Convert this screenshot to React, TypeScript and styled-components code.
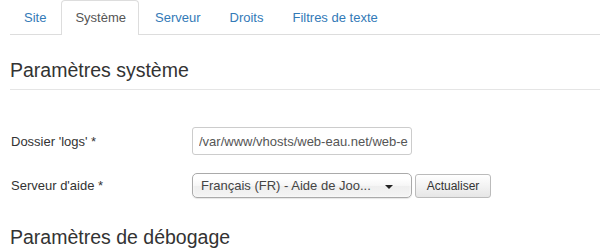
import React from 'react';
import styled, { createGlobalStyle } from 'styled-components';

const tabs = ['Site', 'Système', 'Serveur', 'Droits', 'Filtres de texte'];

const App: React.FC = () => {
  return (
    <>
      <GlobalStyle />
      <Page>
        {/* tabs */}
        <TabList>
          {tabs.map(tab => (
            <Tab key={tab} active={tab === 'Système'}>
              {tab}
            </Tab>
          ))}
        </TabList>

        {/* system settings */}
        <Legend>Paramètres système</Legend>

        <FieldRow>
          <Label>Dossier 'logs' *</Label>
          <TextInput defaultValue="/var/www/vhosts/web-eau.net/web-eau/logs" />
        </FieldRow>

        <FieldRow second>
          <Label>Serveur d'aide *</Label>
          <Controls>
            <Chosen>
              <span>Français (FR) - Aide de Joo...</span>
              <Caret />
            </Chosen>
            <Button>Actualiser</Button>
          </Controls>
        </FieldRow>

        {/* debug settings */}
        <Legend next>Paramètres de débogage</Legend>
      </Page>
    </>
  );
};

export default App;

/*** style ***/
const GlobalStyle = createGlobalStyle`
  body {
    margin: 0;
    background: #ffffff;
    font-family: "Liberation Sans", Arial, sans-serif;
    color: #333333;
    overflow: hidden;
  }
`;

const Page = styled.div`
  padding-left: 10px;
  width: 590px;
  height: 250px;
`;

const TabList = styled.ul`
  display: flex;
  margin: 0;
  padding: 0;
  list-style: none;
  border-bottom: 1px solid #dddddd;
  height: 34px;
`;

const Tab = styled.li<{ active?: boolean }>`
  padding: 0 12px 0 13px;
  margin-right: 2px;
  height: 34px;
  line-height: 34px;
  font-size: 13px;
  box-sizing: border-box;
  border: 1px solid ${p => (p.active ? '#dddddd' : 'transparent')};
  border-bottom: none;
  border-radius: 4px 4px 0 0;
  background: #ffffff;
  color: ${p => (p.active ? '#555555' : '#337ab7')};
  height: ${p => (p.active ? '35px' : '34px')};
  margin-bottom: -1px;
  cursor: pointer;
`;

const Legend = styled.div<{ next?: boolean }>`
  margin-top: ${p => (p.next ? '27px' : '23px')};
  font-size: 19.5px;
  line-height: 24px;
  padding-bottom: 7px;
  color: #333333;
  border-bottom: ${p => (p.next ? 'none' : '1px solid #e5e5e5')};
`;

const FieldRow = styled.div<{ second?: boolean }>`
  display: flex;
  align-items: center;
  margin-top: ${p => (p.second ? '18px' : '37px')};
`;

const Label = styled.label`
  width: 181px;
  padding-left: 1px;
  font-size: 13px;
  color: #333333;
`;

const TextInput = styled.input`
  width: 220px;
  height: 28px;
  box-sizing: border-box;
  border: 1px solid #cccccc;
  border-radius: 3px;
  padding: 0 3px 0 6px;
  font-family: "Liberation Sans", Arial, sans-serif;
  font-size: 13px;
  color: #555555;
  outline: none;
`;

const Controls = styled.div`
  display: flex;
  align-items: center;
  gap: 3px;
`;

const Chosen = styled.div`
  width: 220px;
  height: 25px;
  box-sizing: border-box;
  display: flex;
  align-items: center;
  justify-content: space-between;
  padding: 0 18px 0 8px;
  border: 1px solid #aaaaaa;
  border-radius: 5px;
  background: linear-gradient(#ffffff 20%, #f6f6f6 50%, #eeeeee 52%, #f4f4f4 100%);
  box-shadow: 0 0 3px #ffffff inset, 0 1px 1px rgba(0, 0, 0, 0.1);
  font-size: 13px;
  color: #444444;
  white-space: nowrap;
`;

const Caret = styled.span`
  width: 0;
  height: 0;
  margin-top: 3px;
  border-left: 4px solid transparent;
  border-right: 4px solid transparent;
  border-top: 4px solid #222222;
`;

const Button = styled.button`
  width: 76px;
  height: 24px;
  box-sizing: border-box;
  padding: 0;
  border: 1px solid #bbbbbb;
  border-radius: 3px;
  background: linear-gradient(#ffffff, #e6e6e6);
  font-family: "Liberation Sans", Arial, sans-serif;
  font-size: 12px;
  color: #333333;
`;
